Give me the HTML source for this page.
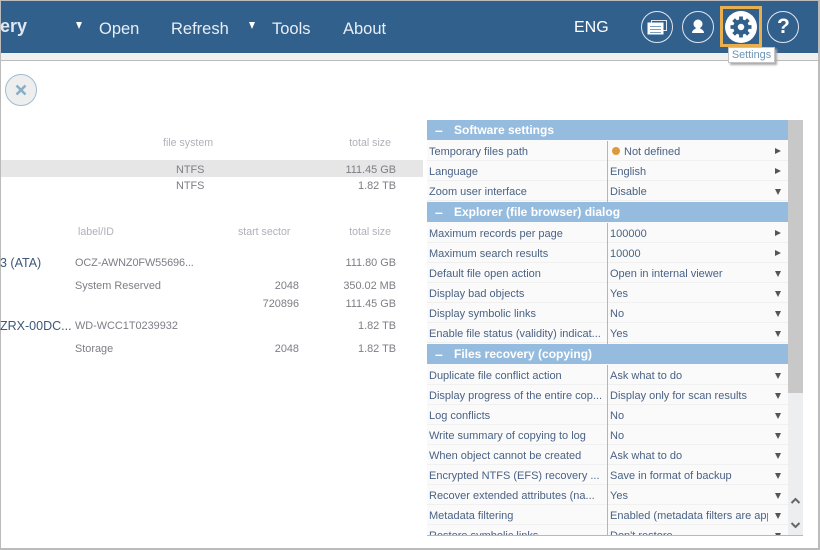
<!DOCTYPE html>
<html><head><meta charset="utf-8"><style>
html,body{margin:0;padding:0;background:#fff}
#p{position:relative;width:820px;height:550px;overflow:hidden;background:#fff;font-family:"Liberation Sans",sans-serif;font-size:10.9px;color:#7d7d85}
#p div,#p span{position:absolute;white-space:nowrap}
.n{font-size:16.500px;line-height:20px;top:19px;color:#e8eef5}
.h{color:#b0b0ba;font-size:10.600px;line-height:14px}
.t{line-height:14px}
.r{text-align:right;width:80px}
#g{left:427px;top:120px;width:361px;height:415px;overflow:hidden;background:#fafafa}
#g .b{left:0;width:361px;height:20px;background:#95bcdf;color:#fff;font-weight:bold;font-size:12px;line-height:20px;padding:0}
#g .b b{position:absolute;left:8px;top:0;font-size:14px}
#g .b i{position:absolute;left:27px;top:0;font-style:normal}
#g .a{left:0;width:361px;height:20px;border-bottom:1px solid #f0f0f0;box-sizing:border-box;color:#4a6285;line-height:20px;font-size:11px}
#g .a u{position:absolute;left:2px;top:1px;text-decoration:none}
#g .a s{position:absolute;left:183px;top:1px;text-decoration:none;width:158px;overflow:hidden}
#g .a em{position:absolute;right:7px;top:8px;width:0;height:0;border-left:3.500px solid transparent;border-right:3.500px solid transparent;border-top:6px solid #555}
#g .a em.q{right:7px;top:7px;border-top:3.500px solid transparent;border-bottom:3.500px solid transparent;border-left:6px solid #555;border-right:0}
</style></head><body><div id="p">
<div style="left:0;top:0;width:820px;height:1px;background:#bbb"></div>
<div style="left:0;top:1px;width:820px;height:52px;background:#31608c"></div>
<div style="left:0;top:53px;width:820px;height:7px;background:#f0f0f0"></div>
<div style="left:0;top:60px;width:820px;height:1px;background:#bbb"></div>
<div style="left:0;top:0;width:1px;height:550px;background:#bbb"></div>
<div style="left:818px;top:0;width:2px;height:550px;background:#bbb"></div>
<div style="left:0;top:548px;width:820px;height:2px;background:#bbb"></div>

<div style="left:0;top:15px;color:#dfe8f2;font-weight:bold;font-size:18px;line-height:22px">ery</div>
<div style="left:76px;top:22px;width:0;height:0;border-left:3.500px solid transparent;border-right:3.500px solid transparent;border-top:7px solid #fff"></div>
<div class="n" style="left:99px">Open</div>
<div class="n" style="left:171px">Refresh</div>
<div style="left:249px;top:22px;width:0;height:0;border-left:3.500px solid transparent;border-right:3.500px solid transparent;border-top:7px solid #fff"></div>
<div class="n" style="left:272px">Tools</div>
<div class="n" style="left:343px">About</div>
<div class="n" style="left:574px;top:18px;color:#fff;font-size:16px">ENG</div>

<svg style="position:absolute;left:0;top:0" width="820" height="60" viewBox="0 0 820 60">
<circle cx="657" cy="27" r="15.500" fill="none" stroke="#dfe8f2" stroke-width="1"/>
<rect x="651.500" y="20.500" width="15" height="10" fill="#31608c" stroke="#dfe8f2" stroke-width="1"/>
<rect x="647.500" y="22.500" width="16" height="12" fill="#fff"/>
<path d="M650 26.500h11M650 29.500h11M650 32.500h11" stroke="#7d9dbd" stroke-width="1"/>
<circle cx="698" cy="27" r="15.500" fill="none" stroke="#dfe8f2" stroke-width="1"/>
<circle cx="698" cy="24" r="4.500" fill="#fff"/>
<path d="M698 26c-1 3-6 3-6 7h12c0-4-5-4-6-7z" fill="#fff"/>
<rect x="721.500" y="7.500" width="39" height="38" fill="none" stroke="#e9ae4d" stroke-width="3"/>
<circle cx="741" cy="27" r="16" fill="#fff"/>
<circle cx="741" cy="27" r="5.500" fill="none" stroke="#31608c" stroke-width="4.500"/>
<path d="M741 16.500v5M741 32.500v5M730.500 27h5M746.500 27h5M733.600 19.600l3.500 3.500M744.900 30.900l3.500 3.500M748.400 19.600l-3.500 3.500M737.100 30.900l-3.500 3.500" stroke="#31608c" stroke-width="3.800"/>
<circle cx="783" cy="27" r="15.500" fill="none" stroke="#dfe8f2" stroke-width="1"/>
</svg>
<div style="left:777px;top:15px;color:#fff;font-weight:bold;font-size:21px;line-height:24px">?</div>

<div style="left:728px;top:47px;width:45px;height:14px;background:#fff;border:1px solid #c4c4c4;box-shadow:2px 2px 2px #aaa;color:#6d93b3;font-size:10.900px;line-height:14px;text-align:center">Settings</div>

<svg style="position:absolute;left:0;top:70px" width="40" height="40"><circle cx="21" cy="20" r="15.500" fill="#eeeeee" stroke="#9dbdd3" stroke-width="1"/><path d="M16.500 15.500l9 9M25.500 15.500l-9 9" stroke="#85afc9" stroke-width="2.500"/></svg>

<div class="h" style="left:163px;top:136px">file system</div>
<div class="h r" style="left:311px;top:136px">total size</div>
<div style="left:1px;top:160px;width:422px;height:17px;background:#e6e6e6"></div>
<div class="t" style="left:176px;top:163px">NTFS</div>
<div class="t r" style="left:316px;top:163px">111.45 GB</div>
<div class="t" style="left:176px;top:179px">NTFS</div>
<div class="t r" style="left:316px;top:179px">1.82 TB</div>
<div class="h" style="left:78px;top:225px">label/ID</div>
<div class="h" style="left:238px;top:225px">start sector</div>
<div class="h r" style="left:311px;top:225px">total size</div>

<div style="left:0;top:255px;color:#3d5878;font-size:12.500px;line-height:16px">3 (ATA)</div>
<div class="t" style="left:75px;top:256px;letter-spacing:-.1px">OCZ-AWNZ0FW55696...</div>
<div class="t r" style="left:316px;top:256px">111.80 GB</div>
<div class="t" style="left:75px;top:279px">System Reserved</div>
<div class="t r" style="left:219px;top:279px">2048</div>
<div class="t r" style="left:316px;top:279px">350.02 MB</div>
<div class="t r" style="left:219px;top:297px">720896</div>
<div class="t r" style="left:316px;top:297px">111.45 GB</div>
<div style="left:0;top:318px;color:#3d5878;font-size:12.500px;line-height:16px">ZRX-00DC...</div>
<div class="t" style="left:75px;top:319px">WD-WCC1T0239932</div>
<div class="t r" style="left:316px;top:319px">1.82 TB</div>
<div class="t" style="left:75px;top:342px">Storage</div>
<div class="t r" style="left:219px;top:342px">2048</div>
<div class="t r" style="left:316px;top:342px">1.82 TB</div>

<div id="g">
<div class="b" style="top:0"><b>–</b><i>Software settings</i></div>
<div class="a" style="top:21px"><u>Temporary files path</u><s style="left:197px">Not defined</s><em class="q"></em></div>
<div class="a" style="top:41px"><u>Language</u><s>English</s><em class="q"></em></div>
<div class="a" style="top:61px"><u>Zoom user interface</u><s>Disable</s><em></em></div>
<div class="b" style="top:82px"><b>–</b><i>Explorer (file browser) dialog</i></div>
<div class="a" style="top:103px"><u>Maximum records per page</u><s>100000</s><em class="q"></em></div>
<div class="a" style="top:123px"><u>Maximum search results</u><s>10000</s><em class="q"></em></div>
<div class="a" style="top:143px"><u>Default file open action</u><s>Open in internal viewer</s><em></em></div>
<div class="a" style="top:163px"><u>Display bad objects</u><s>Yes</s><em></em></div>
<div class="a" style="top:183px"><u>Display symbolic links</u><s>No</s><em></em></div>
<div class="a" style="top:203px"><u>Enable file status (validity) indicat...</u><s>Yes</s><em></em></div>
<div class="b" style="top:224px"><b>–</b><i>Files recovery (copying)</i></div>
<div class="a" style="top:245px"><u>Duplicate file conflict action</u><s>Ask what to do</s><em></em></div>
<div class="a" style="top:265px"><u>Display progress of the entire cop...</u><s>Display only for scan results</s><em></em></div>
<div class="a" style="top:285px"><u>Log conflicts</u><s>No</s><em></em></div>
<div class="a" style="top:305px"><u>Write summary of copying to log</u><s>No</s><em></em></div>
<div class="a" style="top:325px"><u>When object cannot be created</u><s>Ask what to do</s><em></em></div>
<div class="a" style="top:345px"><u>Encrypted NTFS (EFS) recovery ...</u><s>Save in format of backup</s><em></em></div>
<div class="a" style="top:365px"><u>Recover extended attributes (na...</u><s>Yes</s><em></em></div>
<div class="a" style="top:385px"><u>Metadata filtering</u><s>Enabled (metadata filters are applied)</s><em></em></div>
<div class="a" style="top:405px"><u>Restore symbolic links</u><s>Don't restore</s><em></em></div>
<div style="left:180px;top:21px;width:1px;height:61px;background:#b5b5b5"></div>
<div style="left:180px;top:103px;width:1px;height:121px;background:#b5b5b5"></div>
<div style="left:180px;top:245px;width:1px;height:170px;background:#b5b5b5"></div>
</div>
<div style="left:612px;top:147px;width:8px;height:8px;border-radius:50%;background:#dd9a3c"></div>

<div style="left:788px;top:120px;width:15px;height:415px;background:#eceef0"></div>
<div style="left:788px;top:120px;width:15px;height:273px;background:#c8c8c8"></div>
<svg style="position:absolute;left:788px;top:490px" width="15" height="45"><path d="M3.500 13l4-4 4 4M3.500 33l4 4 4-4" fill="none" stroke="#666" stroke-width="2"/></svg>
<div style="left:427px;top:535px;width:376px;height:1px;background:#b8b8b8"></div>
</div></body></html>
